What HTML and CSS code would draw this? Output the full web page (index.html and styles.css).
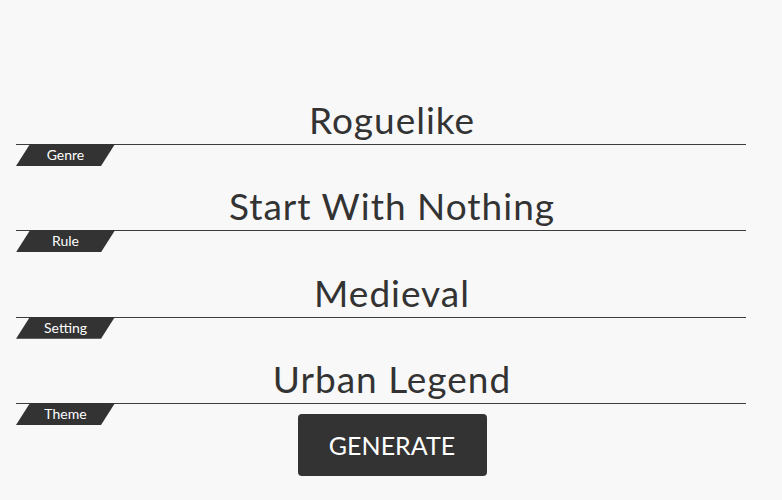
FILE: index.html
```html
<!DOCTYPE html>
<html>
<head>
<meta charset="utf-8">
<link rel="stylesheet" href="styles.css">
</head>
<body>
<main class="page">
  <section class="rows">
    <div class="row">
      <div class="title">Roguelike</div>
      <div class="line"><span class="tag">Genre</span></div>
    </div>
    <div class="row">
      <div class="title">Start With Nothing</div>
      <div class="line"><span class="tag">Rule</span></div>
    </div>
    <div class="row">
      <div class="title">Medieval</div>
      <div class="line"><span class="tag">Setting</span></div>
    </div>
    <div class="row">
      <div class="title">Urban Legend</div>
      <div class="line"><span class="tag">Theme</span></div>
    </div>
  </section>
  <div class="actions">
    <button class="generate" type="button">GENERATE</button>
  </div>
</main>
</body>
</html>
```
FILE: styles.css
```css
html, body {
  margin: 0;
  padding: 0;
  background: #f8f8f8;
}
.page {
  padding-top: 80px;
  font-family: Lato, "Open Sans", sans-serif;
  color: #333;
}
.row {
  margin-bottom: 21.33px;
}
.row:last-child {
  margin-bottom: 0;
}
.title {
  height: 64px;
  box-sizing: border-box;
  display: flex;
  align-items: flex-end;
  justify-content: center;
  padding: 0 0 6px 2px;
  font-size: 37px;
  line-height: 37px;
  letter-spacing: 1px;
  color: #333;
}
.line {
  position: relative;
  height: 1px;
  background: #3d3d3d;
  margin: 0 36px 0 16px;
}
.tag {
  position: absolute;
  left: 0;
  top: 0;
  width: 99px;
  height: 22px;
  background: #333;
  clip-path: polygon(14px 0, 99px 0, 85px 100%, 0 100%);
  color: #fff;
  font-size: 14px;
  line-height: 22px;
  text-align: center;
}
.actions {
  display: flex;
  justify-content: center;
  padding-left: 2px;
  margin-top: 10px;
}
.generate {
  width: 189px;
  height: 62px;
  border: none;
  border-radius: 4px;
  background: #333;
  color: #fff;
  font-family: Lato, "Open Sans", sans-serif;
  font-size: 25px;
  padding: 0;
}
```
